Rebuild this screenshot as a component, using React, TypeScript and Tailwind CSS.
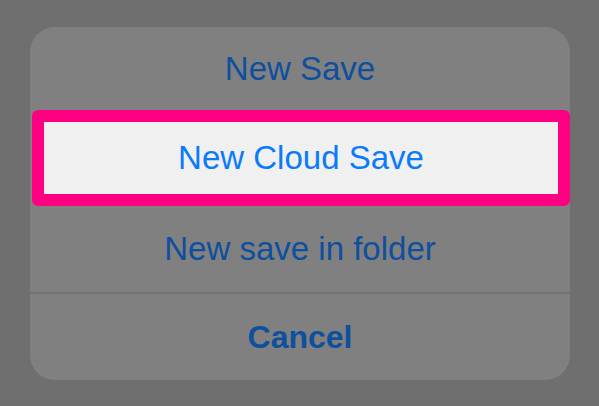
export default function App() {
  const font = { fontFamily: '"Liberation Sans", Arial, sans-serif' };
  return (
    <div className="w-[599px] h-[406px] bg-[#6f6f6f] pt-[27px] px-[30px]" style={font}>
      <div className="w-[540px] h-[353px] bg-[#808080] rounded-[25px] flex flex-col">
        <div className="h-[83px] flex items-center justify-center text-[33px] text-[#0e4f9e]">
          New Save
        </div>
        <div className="h-[96px] ml-[2px] border-[12px] border-[#ff0082] rounded-[6px] bg-[#f0f0f0] flex items-center justify-center text-[33px] text-[#0a7bfa]">
          New Cloud Save
        </div>
        <div className="h-[86px] flex items-center justify-center text-[33px] text-[#0e4f9e]">
          New save in folder
        </div>
        <div className="h-[2px] bg-[#737373]" />
        <div className="flex-1 flex items-center justify-center text-[32px] font-bold text-[#0e4f9e]">
          Cancel
        </div>
      </div>
    </div>
  );
}
